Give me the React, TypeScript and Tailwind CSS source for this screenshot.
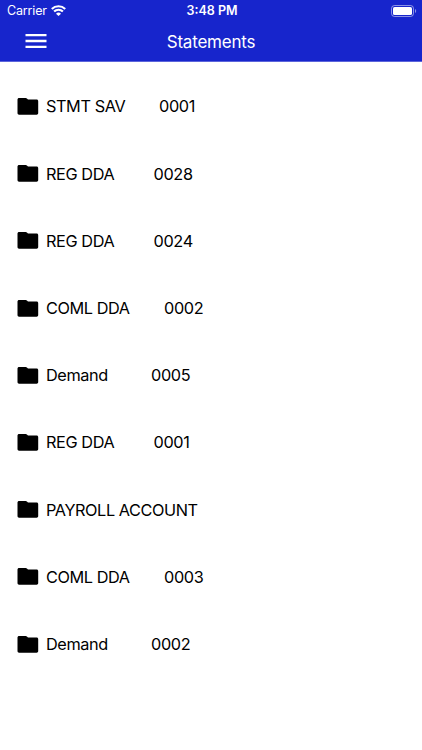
import React from "react";
import { MdMenu } from "react-icons/md";

// offset is the space in px between the name and the number
const accounts = [
  { name: "STMT SAV", number: "0001", nameWidth: 79, offset: 34 },
  { name: "REG DDA", number: "0028", nameWidth: 69, offset: 38.5 },
  { name: "REG DDA", number: "0024", nameWidth: 69, offset: 38.5 },
  { name: "COML DDA", number: "0002", nameWidth: 84, offset: 34 },
  { name: "Demand", number: "0005", nameWidth: 62, offset: 43 },
  { name: "REG DDA", number: "0001", nameWidth: 69, offset: 38.5 },
  { name: "PAYROLL ACCOUNT", number: "", nameWidth: 152, offset: 0 },
  { name: "COML DDA", number: "0003", nameWidth: 84, offset: 34 },
  { name: "Demand", number: "0002", nameWidth: 62, offset: 43 },
];

function FolderIcon() {
  return (
    <svg className="shrink-0" width="22" height="17" viewBox="-0.5 0 22 17" fill="currentColor">
      <path d="M1.6 0h6.6c.5 0 .9.2 1.2.5l1.1 1.1h8.6c.9 0 1.6.7 1.6 1.6v11.9c0 .9-.7 1.6-1.6 1.6H1.6C.7 16.7 0 16 0 15.1V1.6C0 .7.7 0 1.6 0z" />
    </svg>
  );
}

function StatusBar() {
  return (
    <div className="grid h-[22px] grid-cols-3 items-center pl-[7px] pr-[5px] text-[12.5px]">
      <div className="flex items-center gap-[5px]">
        <span className="w-[39px] pt-px tracking-[-0.15px]">Carrier</span>
        <svg className="mb-px" width="15" height="11" viewBox="0 0 15 11" fill="none" stroke="currentColor" strokeWidth="2.1">
          <path d="M0.8 4a9.5 9.5 0 0 1 13.4 0" />
          <path d="M3.1 6.6a6.2 6.2 0 0 1 8.8 0" />
          <path d="M7.5 11 5 8.7a3.5 3.5 0 0 1 5 0z" fill="currentColor" stroke="none" />
        </svg>
      </div>
      <span className="pt-px text-center font-semibold">3:48 PM</span>
      <svg className="justify-self-end" width="26" height="12" viewBox="0 0 26 12" fill="none">
        <rect x="0.5" y="0.5" width="22" height="11" rx="3" stroke="white" strokeOpacity="0.5" />
        <rect x="2" y="2" width="19" height="8" rx="1.6" fill="white" />
        <path d="M24 4v4c1.6-.7 1.6-3.3 0-4z" fill="white" fillOpacity="0.5" />
      </svg>
    </div>
  );
}

export default function App() {
  return (
    <div className="min-h-[750px] bg-white font-['Inter',sans-serif] text-black">
      <header className="h-[62px] border-b border-[#5c65db] bg-[#1725cc] text-white">
        <StatusBar />
        <div className="grid h-[39px] grid-cols-[1fr_auto_1fr] items-center">
          <button aria-label="Menu" className="mb-px ml-[22px] w-7">
            <MdMenu size={28} />
          </button>
          <h1 className="pt-0.5 text-[17px] tracking-[-0.2px]">Statements</h1>
        </div>
      </header>

      <ul className="pt-[11px]">
        {accounts.map((account, index) => (
          <li key={index} className="flex h-[67.2px] items-center pl-[17px] text-[16.3px] tracking-[-0.42px]">
            <FolderIcon />
            <span className="ml-[7px] shrink-0 whitespace-nowrap" style={{ width: account.nameWidth }}>
              {account.name}
            </span>
            <span className="tracking-[-0.35px]" style={{ marginLeft: account.offset }}>
              {account.number}
            </span>
          </li>
        ))}
      </ul>
    </div>
  );
}
